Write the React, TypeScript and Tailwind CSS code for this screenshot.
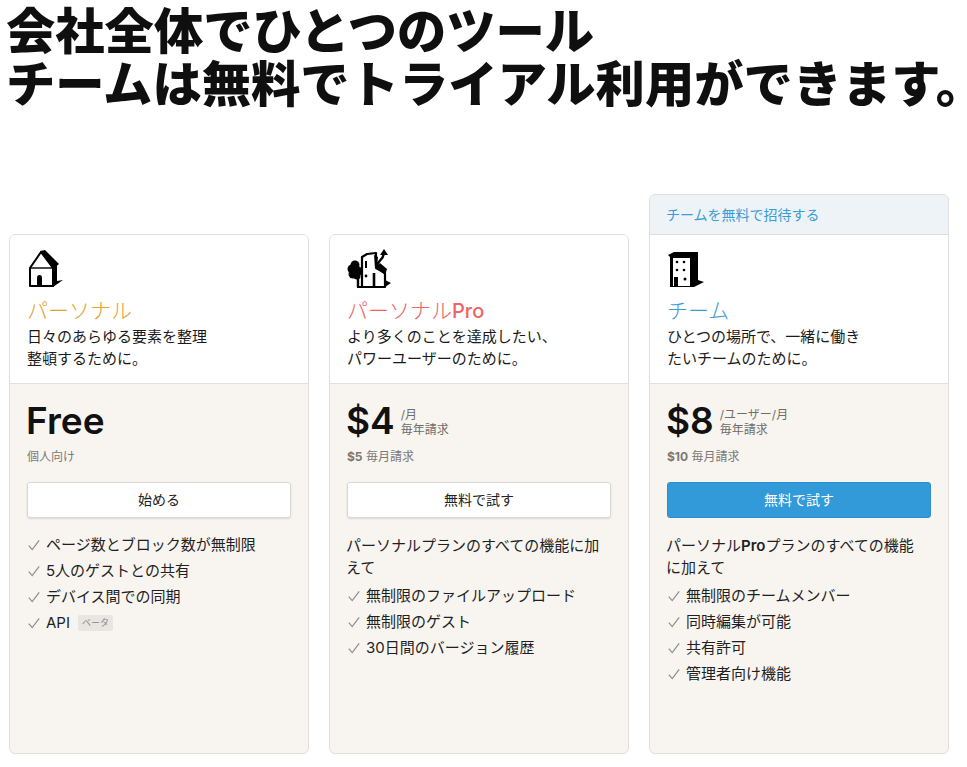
import React from "react";

function Check() {
  return (
    <svg width="12" height="12" viewBox="0 0 12 12" className="shrink-0 mr-[6px]" fill="none">
      <path d="M0.8 6.6 L4.2 10.6 L11.2 1.4" stroke="#8f8d89" strokeWidth="1.2" />
    </svg>
  );
}

function House() {
  return (
    <svg width="36" height="40" viewBox="0 0 36 40">
      <path d="M26 16 L30 14 L30 32 L36 31 L26 38 Z" fill="#000" />
      <path d="M3 19 L3 37 L26 37 L26 19 L14 3 Z" fill="#fff" stroke="#000" strokeWidth="2" strokeLinejoin="round" />
      <path d="M13 2 L18 1 L32 15 L26 20 Z" fill="#000" />
      <path d="M3 19 L26 19" stroke="#000" strokeWidth="1.4" />
      <path d="M10 37 L10 29 Q10 26 12.5 26 Q15 26 15 29 L15 37 Z" fill="#000" />
    </svg>
  );
}

function Tower() {
  return (
    <svg width="44" height="40" viewBox="0 0 44 40">
      <path d="M18 38 L38 38 L44 34 L38 31 Z" fill="#000" />
      <path d="M15 38 L15 8 L20 5 L29 4 L29 19 L38 24 L38 38 Z" fill="#fff" stroke="#000" strokeWidth="2.2" strokeLinejoin="round" />
      <path d="M27 6 L31 8 L30 18 L28 18 Z" fill="#000" />
      <path d="M28 18 L33 14 L40 20 L38 26 Z" fill="#000" />
      <path d="M30 17 C30 11 37 12 37 3" fill="none" stroke="#000" strokeWidth="2.4" />
      <path d="M37 0 L41 6 L33 6 Z" fill="#000" />
      <circle cx="8" cy="16" r="4.5" fill="#000" />
      <circle cx="5" cy="20" r="4.5" fill="#000" />
      <circle cx="6" cy="25" r="4.5" fill="#000" />
      <circle cx="11" cy="22" r="4.5" fill="#000" />
      <circle cx="10" cy="27" r="3.5" fill="#000" />
      <path d="M11 27 L11 38" stroke="#000" strokeWidth="2.4" />
      <path d="M10 38 L16 38" stroke="#000" strokeWidth="2" />
      <path d="M19 12 L19 19" stroke="#000" strokeWidth="2" />
      <circle cx="19" cy="27" r="1.4" fill="#000" />
      <path d="M27 24 L27 37" stroke="#000" strokeWidth="2.6" />
    </svg>
  );
}

function Office() {
  return (
    <svg width="38" height="40" viewBox="0 0 38 40">
      <path d="M1 6 L7 3 L31 3 L31 31 L37 33 L27 38 L3 38 L3 8 Z" fill="#000" />
      <rect x="6" y="9" width="17" height="28" fill="#fff" />
      <circle cx="10" cy="13" r="1.3" fill="#000" />
      <circle cx="17" cy="13" r="1.3" fill="#000" />
      <circle cx="10" cy="21" r="1.3" fill="#000" />
      <circle cx="17" cy="21" r="1.3" fill="#000" />
      <circle cx="18" cy="30" r="1.5" fill="#000" />
      <rect x="7" y="28" width="4" height="10" fill="#000" />
    </svg>
  );
}

type Plan = {
  banner?: string;
  icon: React.ReactNode;
  title: React.ReactNode;
  color: string;
  desc: string[];
  price: string;
  unit?: string[];
  sub: React.ReactNode;
  cta: string;
  primary?: boolean;
  intro?: React.ReactNode;
  items: React.ReactNode[];
};

function Card({ p }: { p: Plan }) {
  return (
    <div className="w-[300px] shrink-0 border border-[#e0dfdc] rounded-[6px] overflow-hidden bg-[#f8f5f1] flex flex-col h-full">
      {p.banner && (
        <div className="h-[40px] bg-[#eef3f7] border-b border-[#dcdfe1] pl-[16px] flex items-center text-[14px] text-[#3a9cd6]">
          {p.banner}
        </div>
      )}
      <div className="h-[149px] bg-white border-b border-[#e3e2df] pl-[17px] pt-[14px] shrink-0">
        <div className="h-[40px]">{p.icon}</div>
        <div className={`text-[21px] leading-[28px] mt-[8px] font-light ${p.color}`}>{p.title}</div>
        <div className="text-[15px] leading-[22px] text-[#1a1a1a] mt-[1px]">
          {p.desc.map((d) => (
            <div key={d}>{d}</div>
          ))}
        </div>
      </div>
      <div className="pl-[17px] pr-[17px] flex-1">
        <div className="flex items-center h-[44px] mt-[15px] -ml-[1px]">
          <span className="text-[37px] leading-[44px] font-semibold text-[#111] font-['Inter',sans-serif]">{p.price}</span>
          {p.unit && (
            <span className="ml-[6px] text-[12px] leading-[15px] text-[#6f6d69] mt-[2px]">
              {p.unit.map((u) => (
                <div key={u}>{u}</div>
              ))}
            </span>
          )}
        </div>
        <div className="text-[12px] leading-[16px] text-[#7b7975] mt-[6px]">{p.sub}</div>
        <div
          className={`mt-[17px] h-[36px] w-[264px] flex items-center justify-center rounded-[3px] text-[14px] pb-[1px] border ${
            p.primary
              ? "bg-[#339ad9] text-white border-[#2f8ec8]"
              : "bg-white text-[#222] border-[#d9d8d5] shadow-[0_1px_2px_rgba(15,15,15,0.12)]"
          }`}
        >
          {p.cta}
        </div>
        <div className="mt-[14px] text-[15px] leading-[26px] text-[#1f1f1f]">
          {p.intro && <div className="leading-[22px] mb-[4px] -ml-[1px] pr-[10px] pt-[3px]">{p.intro}</div>}
          {p.items.map((it, i) => (
            <div key={i} className="flex items-center pl-[1px]">
              <Check />
              {it}
            </div>
          ))}
        </div>
      </div>
    </div>
  );
}

const plans: Plan[] = [
  {
    icon: <House />,
    title: "パーソナル",
    color: "text-[#e0a235]",
    desc: ["日々のあらゆる要素を整理", "整頓するために。"],
    price: "Free",
    sub: "個人向け",
    cta: "始める",
    items: [
      "ページ数とブロック数が無制限",
      "5人のゲストとの共有",
      "デバイス間での同期",
      <span className="flex items-center">
        API
        <span className="ml-[8px] bg-[#e8e6e2] text-[#8a8884] text-[9px] leading-[16px] h-[16px] px-[4px] rounded-[2px]">ベータ</span>
      </span>,
    ],
  },
  {
    icon: <Tower />,
    title: (
      <>
        パーソナル<span className="font-medium font-['Inter',sans-serif] text-[20px]">Pro</span>
      </>
    ),
    color: "text-[#ec6464]",
    desc: ["より多くのことを達成したい、", "パワーユーザーのために。"],
    price: "$4",
    unit: ["/月", "毎年請求"],
    sub: (
      <>
        <b className="font-bold">$5</b> 毎月請求
      </>
    ),
    cta: "無料で試す",
    intro: "パーソナルプランのすべての機能に加えて",
    items: ["無制限のファイルアップロード", "無制限のゲスト", "30日間のバージョン履歴"],
  },
  {
    banner: "チームを無料で招待する",
    icon: <Office />,
    title: "チーム",
    color: "text-[#3b9bd3]",
    desc: ["ひとつの場所で、一緒に働き", "たいチームのために。"],
    price: "$8",
    unit: ["/ユーザー/月", "毎年請求"],
    sub: (
      <>
        <b className="font-bold">$10</b> 毎月請求
      </>
    ),
    cta: "無料で試す",
    primary: true,
    intro: (
      <>
        パーソナル<b className="font-semibold">Pro</b>プランのすべての機能に加えて
      </>
    ),
    items: ["無制限のチームメンバー", "同時編集が可能", "共有許可", "管理者向け機能"],
  },
];

export default function App() {
  return (
    <div className="w-[967px] h-[767px] overflow-hidden bg-white font-['Inter','Noto_Sans_CJK_JP',sans-serif]">
      <h1 className="pl-[6px] pt-[5px] text-[49.3px] leading-[53px] font-black text-[#0f0f0f] whitespace-nowrap">
        会社全体でひとつのツール
        <br />
        チームは無料でトライアル利用ができます。
      </h1>
      <div className="flex items-end gap-[20px] pl-[9px] h-[560px] mt-[83px]">
        <div className="h-[520px]"><Card p={plans[0]} /></div>
        <div className="h-[520px]"><Card p={plans[1]} /></div>
        <div className="h-[560px]"><Card p={plans[2]} /></div>
      </div>
    </div>
  );
}
